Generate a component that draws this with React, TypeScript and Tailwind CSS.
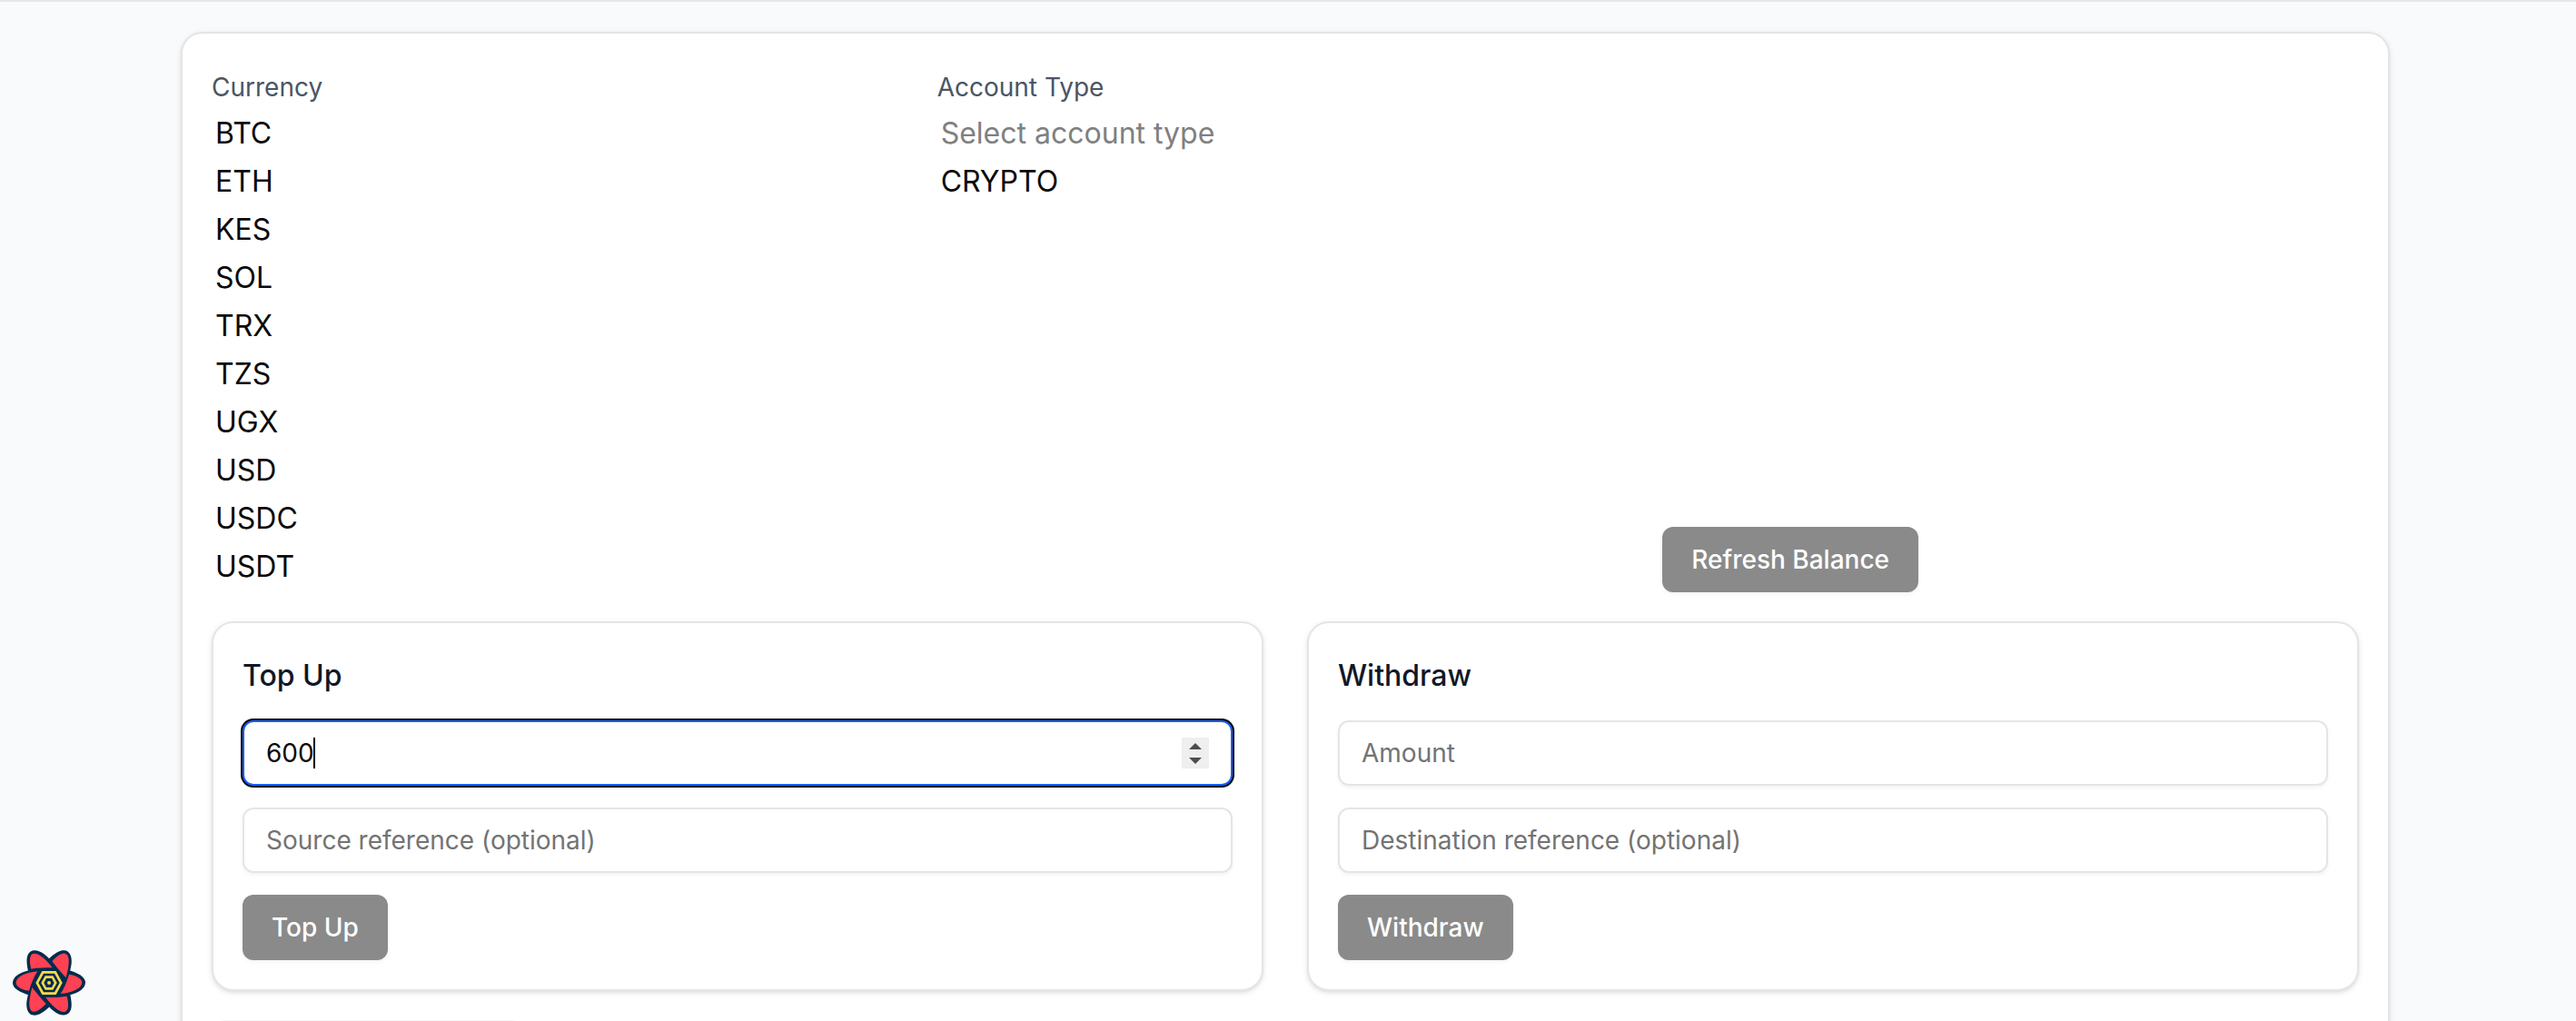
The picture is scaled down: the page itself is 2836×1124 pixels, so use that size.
import type { ReactNode } from "react";

const currencies = ["BTC", "ETH", "KES", "SOL", "TRX", "TZS", "UGX", "USD", "USDC", "USDT"];

const listClass =
  "block h-[532px] overflow-hidden border-0 bg-transparent p-0 text-[32px] outline-none";
const optionClass = "px-1 py-[7px]";

const fieldClass =
  "block h-[72px] w-full rounded-xl border-2 bg-white px-6 text-[28px] text-neutral-950 outline-none placeholder:text-neutral-500 placeholder:opacity-100";
const idleField = "border-[#e5e5e5] shadow-[0_2px_4px_rgb(0_0_0/0.05)]";

function Button({ children }: { children: ReactNode }) {
  return (
    <button
      type="button"
      className="flex h-[72px] items-center rounded-xl bg-[#8a8a8a] px-8 text-[28px] font-medium text-white shadow-[0_2px_4px_rgb(0_0_0/0.05)]"
    >
      {children}
    </button>
  );
}

function Panel({ title, children }: { title: string; children: ReactNode }) {
  return (
    <section className="flex flex-col items-start gap-6 rounded-3xl border-2 border-[#e5e5e5] bg-white p-8 shadow-[0_2px_6px_rgb(0_0_0/0.1),0_2px_4px_-2px_rgb(0_0_0/0.1)]">
      <h2 className="text-[32px] leading-[51px] font-medium text-gray-900">{title}</h2>
      {children}
    </section>
  );
}

function Stepper() {
  return (
    <div className="absolute top-[19px] right-[26px] flex h-[34px] w-[30px] flex-col bg-[#efefef]">
      <button type="button" aria-label="Increase amount" className="flex flex-1 items-end justify-center pb-1">
        <svg width="14" height="7" viewBox="0 0 14 7">
          <path d="M0 7 7 0l7 7z" fill="#4d4d4d" />
        </svg>
      </button>
      <button type="button" aria-label="Decrease amount" className="flex flex-1 items-start justify-center pt-[5px]">
        <svg width="14" height="7" viewBox="0 0 14 7">
          <path d="M0 0h14L7 7z" fill="#4d4d4d" />
        </svg>
      </button>
    </div>
  );
}

function QueryLogo() {
  return (
    <svg width="80" height="80" viewBox="42 54 240 240" aria-hidden="true">
      <path
        transform="translate(42 54) scale(1.263) translate(-33 0)"
        fill="#002C4B"
        d="M72.72 61.34C69.63 46.36 68.97 34.87 70.97 26.53C72.16 21.57 74.33 17.52 77.63 14.6C81.12 11.52 85.54 10 90.49 10C98.67 10 107.27 13.73 116.46 20.8C120.2 23.69 124.09 27.17 128.13 31.24C128.45 30.83 128.82 30.44 129.22 30.08C140.64 19.91 150.26 13.6 158.48 11.16C163.37 9.72 167.96 9.58 172.14 10.98C176.55 12.47 180.07 15.53 182.55 19.83C186.64 26.92 187.72 36.23 186.2 47.73C185.57 52.42 184.51 57.53 183.01 63.06C183.57 63.13 184.14 63.25 184.71 63.44C199.19 68.24 209.45 73.39 215.67 79.29C219.36 82.8 221.77 86.7 222.65 91.02C223.57 95.58 222.67 100.16 220.19 104.45C216.11 111.53 208.59 117.11 197.89 121.53C193.59 123.31 188.73 124.92 183.29 126.36C183.54 126.92 183.73 127.52 183.86 128.14C186.95 143.12 187.62 154.61 185.62 162.95C184.43 167.92 182.26 171.96 178.95 174.88C175.46 177.97 171.05 179.48 166.09 179.48C157.91 179.48 149.32 175.76 140.13 168.68C136.34 165.76 132.41 162.24 128.33 158.11C127.91 158.77 127.39 159.38 126.78 159.92C115.36 170.09 105.74 176.4 97.52 178.84C92.63 180.28 88.04 180.42 83.86 179.02C79.45 177.53 75.93 174.47 73.45 170.17C69.36 163.08 68.28 153.77 69.8 142.27C70.45 137.41 71.57 132.1 73.16 126.34C72.54 126.28 71.91 126.14 71.29 125.94C56.81 121.14 46.55 115.99 40.33 110.09C36.64 106.58 34.23 102.68 33.35 98.36C32.43 93.8 33.33 89.22 35.81 84.93C39.89 77.85 47.41 72.27 58.11 67.85C62.54 66.02 67.56 64.37 73.19 62.89C72.99 62.4 72.83 61.88 72.72 61.34Z"
      />
      <g fill="#FF4154">
        <path d="M103 128C97 105 95 79 112 77C128 76 152 95 173 124C150 124 125 124 103 128Z" />
        <path d="M172 103C185 88 203 75 214 77C231 80 231 108 218 157C203 142 188 123 172 103Z" />
        <path d="M228 146C253 149 272 161 271 173C270 192 240 206 200 210C212 192 221 170 228 146Z" />
        <path d="M221 218C227 241 229 267 212 270C196 271 172 251 151 222C174 222 199 222 221 218Z" />
        <path d="M152 243C139 258 121 271 110 269C93 266 93 238 106 189C119 206 135 225 152 243Z" />
        <path d="M96 200C71 197 52 185 53 173C54 154 84 140 124 136C112 154 103 176 96 200Z" />
      </g>
      <path d="M118 174L139 135H185L206 174L185 213H139Z" fill="#FFD94C" />
      <path d="M127 174L144 143H180L197 174L180 205H144Z" fill="#002C4B" />
      <path d="M136 174L149 151H175L188 174L175 197H149Z" fill="#FFD94C" />
      <path d="M145 174L153 159H171L179 174L171 189H153Z" fill="#002C4B" />
      <circle cx="162" cy="174" r="6" fill="#FFD94C" />
    </svg>
  );
}

export default function App() {
  return (
    <div className="h-screen overflow-hidden bg-[#f9fafc] pr-1.5 font-['Inter',sans-serif] text-neutral-950">
      <header className="-mr-1.5 border-b-2 border-[#e5e7eb]" />
      <main className="mx-auto mt-[33px] flex max-w-[2432px] flex-col gap-8 rounded-3xl border-2 border-[#e5e5e5] bg-white p-8 shadow-[0_2px_6px_rgb(0_0_0/0.1),0_2px_4px_-2px_rgb(0_0_0/0.1)]">
        <div className="grid grid-cols-3 items-end gap-8">
          <div className="text-[32px] leading-[1.6]">
            <label htmlFor="currency" className="text-[28px] text-gray-600">
              Currency
            </label>
            <select id="currency" size={10} className={listClass}>
              {currencies.map((code) => (
                <option key={code} value={code} className={optionClass}>
                  {code}
                </option>
              ))}
            </select>
          </div>
          <div className="text-[32px] leading-[1.6]">
            <label htmlFor="account-type" className="text-[28px] text-gray-600">
              Account Type
            </label>
            <select id="account-type" size={10} className={listClass}>
              <option value="" disabled className="px-1 py-[7px] text-[#808080]">
                Select account type
              </option>
              <option value="CRYPTO" className={optionClass}>
                CRYPTO
              </option>
            </select>
          </div>
          <div className="flex">
            <Button>Refresh Balance</Button>
          </div>
        </div>

        <div className="grid grid-cols-2 gap-12">
          <Panel title="Top Up">
            <div className="relative w-full">
              <input
                type="text"
                inputMode="numeric"
                aria-label="Top up amount"
                defaultValue="600"
                className={`${fieldClass} border-blue-600 ring-2 ring-neutral-950`}
              />
              <span className="pointer-events-none absolute top-[19px] left-[78px] h-[34px] w-0.5 bg-black" />
              <Stepper />
            </div>
            <input
              type="text"
              aria-label="Source reference"
              placeholder="Source reference (optional)"
              className={`${fieldClass} ${idleField}`}
            />
            <Button>Top Up</Button>
          </Panel>
          <Panel title="Withdraw">
            <input
              type="text"
              inputMode="numeric"
              aria-label="Withdraw amount"
              placeholder="Amount"
              className={`${fieldClass} ${idleField}`}
            />
            <input
              type="text"
              aria-label="Destination reference"
              placeholder="Destination reference (optional)"
              className={`${fieldClass} ${idleField}`}
            />
            <Button>Withdraw</Button>
          </Panel>
        </div>

        <div className="h-[72px] w-[346px] rounded-2xl bg-neutral-100" />
      </main>

      <button type="button" aria-label="Open query devtools" className="fixed bottom-0.5 left-3.5">
        <QueryLogo />
      </button>
    </div>
  );
}
